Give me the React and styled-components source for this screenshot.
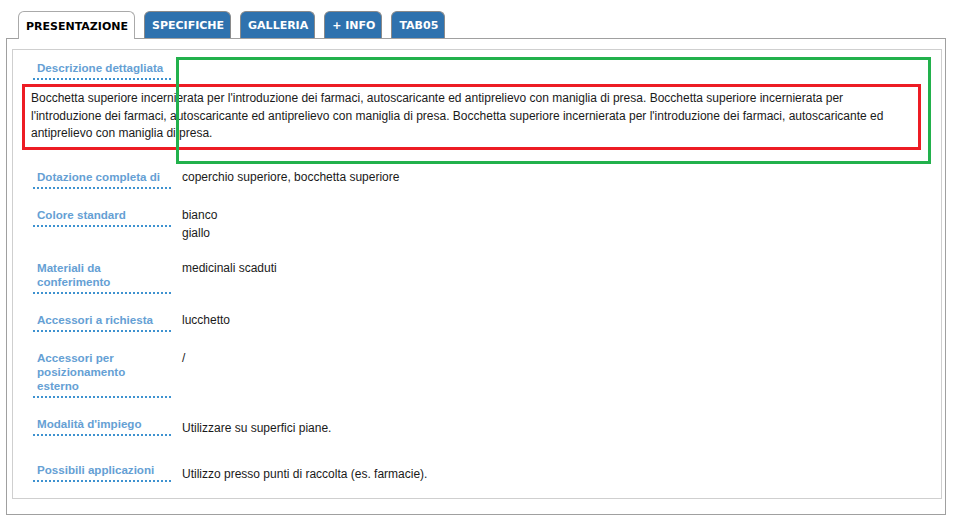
import React from 'react';
import styled, { createGlobalStyle } from 'styled-components';

const GlobalStyle = createGlobalStyle`
  body {
    margin: 0;
    background: #fff;
    font-family: 'Liberation Sans', Arial, sans-serif;
  }
`;

const tabs = ['PRESENTAZIONE', 'SPECIFICHE', 'GALLERIA', '+ INFO', 'TAB05'];

const description =
  "Bocchetta superiore incernierata per l'introduzione dei farmaci, autoscaricante ed antiprelievo con maniglia di presa. Bocchetta superiore incernierata per l'introduzione dei farmaci, autoscaricante ed antiprelievo con maniglia di presa. Bocchetta superiore incernierata per l'introduzione dei farmaci, autoscaricante ed antiprelievo con maniglia di presa.";

const rows = [
  { label: 'Dotazione completa di', values: ['coperchio superiore, bocchetta superiore'] },
  { label: 'Colore standard', values: ['bianco', 'giallo'] },
  { label: 'Materiali da conferimento', values: ['medicinali scaduti'] },
  { label: 'Accessori a richiesta', values: ['lucchetto'] },
  { label: 'Accessori per posizionamento esterno', values: ['/'] },
  { label: "Modalità d'impiego", values: ['Utilizzare su superfici piane.'], para: true },
  { label: 'Possibili applicazioni', values: ['Utilizzo presso punti di raccolta (es. farmacie).'], para: true },
];

const App = () => {
  return (
    <>
      <GlobalStyle />
      <Page>
        <TabBar>
          {tabs.map((t, i) => (
            <Tab key={t} $active={i === 0}>
              {t}
            </Tab>
          ))}
        </TabBar>
        <Panel>
          <Sheet>
            <Highlight />
            <Row $tight>
              <Label>Descrizione dettagliata</Label>
            </Row>
            <Description>{description}</Description>
            {rows.map((r) => (
              <Row key={r.label}>
                <Label>{r.label}</Label>
                <Values $para={r.para}>
                  {r.values.map((v) => (
                    <div key={v}>{v}</div>
                  ))}
                </Values>
              </Row>
            ))}
          </Sheet>
        </Panel>
      </Page>
    </>
  );
};

export default App;

const Page = styled.div`
  padding: 11px 0 0 6px;
  width: 940px;
`;

const TabBar = styled.div`
  display: flex;
  gap: 9px;
  padding-left: 12px;
  height: 27px;
  position: relative;
  z-index: 1;
`;

const Tab = styled.div`
  box-sizing: border-box;
  height: ${(p) => (p.$active ? '28px' : '27px')};
  display: flex;
  align-items: center;
  padding: 1px 6px 0 7px;
  font-family: 'DejaVu Sans', Verdana, sans-serif;
  font-weight: bold;
  font-size: 11px;
  border: 1px solid ${(p) => (p.$active ? '#aaa' : '#8a8a8a')};
  border-bottom: none;
  border-radius: 6px 6px 0 0;
  background: ${(p) => (p.$active ? '#fff' : '#2f72ae')};
  color: ${(p) => (p.$active ? '#000' : '#fff')};
`;

const Panel = styled.div`
  box-sizing: border-box;
  border: 1px solid #a0a0a0;
  padding: 10px 3px 15px 5px;
`;

const Sheet = styled.div`
  position: relative;
  border: 1px solid #cfcfcf;
  padding: 9px 20px 8px;
  font-size: 12px;
  color: #1a1a1a;
`;

const Highlight = styled.div`
  position: absolute;
  left: 163px;
  top: 7px;
  width: 755px;
  height: 107px;
  box-sizing: border-box;
  border: 3px solid #22b14c;
  pointer-events: none;
`;

const Row = styled.div`
  display: flex;
  gap: 11px;
  margin-bottom: ${(p) => (p.$tight ? '4px' : '17px')};

  &:last-child {
    margin-bottom: 0;
  }
`;

const Label = styled.div`
  box-sizing: border-box;
  flex: 0 0 138px;
  align-self: flex-start;
  padding: 2px 4px 3px;
  line-height: 14px;
  font-size: 11.6px;
  font-weight: bold;
  color: #65a0d4;
  border-bottom: 2px dotted #3e92d0;
`;

const Values = styled.div`
  line-height: 18px;
  padding: ${(p) => (p.$para ? '4px 0 7px' : '0')};
`;

const Description = styled.p`
  margin: 0 0 18px -11px;
  border: 3px solid #ed1c24;
  padding: 3px 6px 4px;
  line-height: 17.5px;
`;
